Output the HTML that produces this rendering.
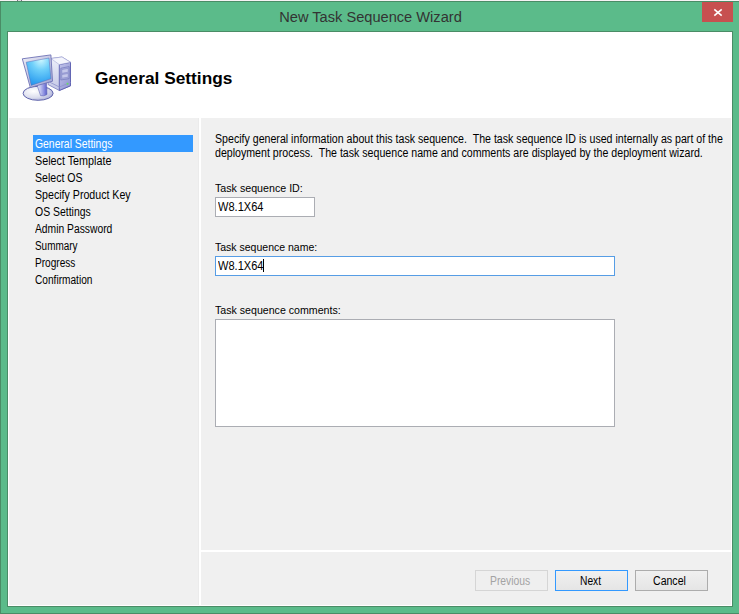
<!DOCTYPE html>
<html><head><meta charset="utf-8">
<style>
*{margin:0;padding:0;box-sizing:border-box}
html,body{width:739px;height:614px;overflow:hidden;background:#f7f3f5}
body{position:relative;font-family:"Liberation Sans",sans-serif;font-size:11px;color:#000}
.a{position:absolute}
.t{position:absolute;white-space:nowrap;line-height:14px;transform-origin:0 0}
#frame{left:0;top:1px;width:739px;height:613px;background:#5bbb8a}
#bt{left:0;top:1px;width:739px;height:1px;background:#4a8c66}
#bl{left:0;top:1px;width:1px;height:613px;background:#4a8c66}
#bb{left:0;top:613px;width:739px;height:1px;background:#4a8c66}
#title{left:1px;top:7.5px;width:739px;text-align:center;font-size:15.5px;color:#333;line-height:18px;transform:scaleX(0.943);transform-origin:369.5px 0}
#close{left:702px;top:2px;width:31px;height:20px;background:#c75050}
#client{left:7px;top:31px;width:726px;height:576px;background:#fff;border:1px solid #4a8c66}
#leftp{left:9px;top:118px;width:190px;height:487px;background:#f0f0f0;border-right:1px solid #ebebeb}
#rightp{left:201px;top:118px;width:530px;height:432px;background:#f0f0f0}
#botp{left:201px;top:552px;width:530px;height:53px;background:#f0f0f0}
#hdtitle{left:95px;top:68px;font-size:17px;font-weight:bold;line-height:22px;transform:scaleX(1.017)}
.nav{left:35px;font-size:11px}
#sel{left:33px;top:135px;width:160px;height:17px;background:#3399ff}
.btn{position:absolute;top:570px;width:73px;height:21px;border:1px solid #acacac;background:linear-gradient(#f0f0f0,#e5e5e5)}
.inp{position:absolute;background:#fff;border:1px solid #abadb3}
</style></head><body>
<div id="frame" class="a"></div>
<div id="bt" class="a"></div>
<div id="bl" class="a"></div>
<div id="bb" class="a"></div>
<div class="a" style="left:17px;top:0;width:5px;height:1px;background:#e0dce0"></div><div class="a" style="left:17px;top:0;width:1px;height:1px;background:#767080"></div>
<div class="a" style="left:21px;top:0;width:1px;height:1px;background:#767080"></div>
<div id="title" class="t">New Task Sequence Wizard</div>
<div id="close" class="a"><svg width="31" height="20" style="position:absolute;left:0;top:0"><path d="M12.3 7.4 L19.7 13.6 M19.7 7.4 L12.3 13.6" stroke="#fff" stroke-width="1.6" fill="none"/></svg></div>
<div id="client" class="a"></div>
<div id="leftp" class="a"></div>
<div id="rightp" class="a"></div>
<div id="botp" class="a"></div>

<svg class="a" style="left:18px;top:48px" width="60" height="56" viewBox="0 0 60 56">
  <defs>
    <radialGradient id="scr" cx="0.6" cy="0.05" r="1.1"><stop offset="0" stop-color="#d0f8ff"/><stop offset="0.35" stop-color="#70d0fa"/><stop offset="0.8" stop-color="#30a0f0"/><stop offset="1" stop-color="#1c84e6"/></radialGradient>
    <linearGradient id="frm" x1="0" y1="0" x2="1" y2="1"><stop offset="0" stop-color="#eeeef6"/><stop offset="1" stop-color="#9fa3d3"/></linearGradient>
    <linearGradient id="twr" x1="0" y1="0" x2="0" y2="1"><stop offset="0" stop-color="#eef0fa"/><stop offset="1" stop-color="#c4c7e6"/></linearGradient>
    <linearGradient id="twf" x1="0" y1="0" x2="1" y2="1"><stop offset="0" stop-color="#c0c3ea"/><stop offset="1" stop-color="#8e92d0"/></linearGradient>
    <linearGradient id="nck" x1="0" y1="0" x2="1" y2="0"><stop offset="0" stop-color="#e8e9f8"/><stop offset="0.35" stop-color="#c0c3ee"/><stop offset="0.7" stop-color="#8a8ee0"/><stop offset="1" stop-color="#5a5ec8"/></linearGradient>
    <radialGradient id="bas" cx="0.35" cy="0.35" r="0.75"><stop offset="0" stop-color="#ffffff"/><stop offset="0.6" stop-color="#dcdeee"/><stop offset="1" stop-color="#a4a8d6"/></radialGradient>
  </defs>
  <!-- tower -->
  <path d="M33 10.5 L44 9 L52.5 14.3 L52.5 37.8 L41.3 42.5 L30 36.5 Z" fill="url(#twr)" stroke="#7a7ec0" stroke-width="0.8"/>
  <path d="M41.3 16.6 L52.5 14.3 L52.5 37.8 L41.3 42.5 Z" fill="url(#twf)" stroke="#5c60b0" stroke-width="0.9"/>
  <path d="M33 10.5 L44 9 L52.5 14.3 L41.3 16.6 Z" fill="#f4f5fc" stroke="#9a9ed0" stroke-width="0.5"/>
  <path d="M42.8 20.2 L51.2 18.6 L51.2 30.6 L42.8 32 Z" fill="#a6aadc" stroke="#6a6eb6" stroke-width="0.6"/>
  <path d="M43.8 21.6 L50.2 20.4 L50.2 24.2 L43.8 25.3 Z" fill="#c4c7ea" stroke="#7c80c2" stroke-width="0.5"/>
  <path d="M43.8 26.6 L50.2 25.5 L50.2 29.2 L43.8 30.2 Z" fill="#c4c7ea" stroke="#7c80c2" stroke-width="0.5"/>
  <path d="M30.5 33.5 L41.3 39 L52.5 34.5" stroke="#8e92cc" stroke-width="0.8" fill="none"/>
  <circle cx="49.5" cy="35.8" r="1" fill="#66dd66"/>
  <!-- base -->
  <ellipse cx="20.1" cy="45.3" rx="15" ry="7" fill="url(#bas)" stroke="#5e62aa" stroke-width="1"/>
  <!-- neck -->
  <path d="M19 37 L28.5 33.5 L29 46.5 Q26 48.6 22.6 47.7 Z" fill="url(#nck)" stroke="#6266b6" stroke-width="0.6"/>
  <!-- monitor frame -->
  <path d="M4.3 10.8 L32.9 6.9 L34.5 33.2 L12.3 39.5 Z" fill="url(#frm)" stroke="#6e72b6" stroke-width="0.9"/>
  <path d="M8.2 14.2 L31 10 L32.9 30.8 L13.2 37.4 Z" fill="url(#scr)" stroke="#5a6ab4" stroke-width="0.5"/>
</svg>

<div id="hdtitle" class="t">General Settings</div>

<div id="sel" class="a"></div>
<div class="t nav" style="font-size:12px;top:137px;color:#fff;transform:scaleX(0.8653)">General Settings</div>
<div class="t nav" style="font-size:12px;top:154px;transform:scaleX(0.8974)">Select Template</div>
<div class="t nav" style="font-size:12px;top:171px;transform:scaleX(0.8800)">Select OS</div>
<div class="t nav" style="font-size:12px;top:188px;transform:scaleX(0.8855)">Specify Product Key</div>
<div class="t nav" style="font-size:12px;top:205px;transform:scaleX(0.8708)">OS Settings</div>
<div class="t nav" style="font-size:12px;top:222px;transform:scaleX(0.8589)">Admin Password</div>
<div class="t nav" style="font-size:12px;top:239px;transform:scaleX(0.8268)">Summary</div>
<div class="t nav" style="font-size:12px;top:256px;transform:scaleX(0.8415)">Progress</div>
<div class="t nav" style="font-size:12px;top:273px;transform:scaleX(0.8443)">Confirmation</div>

<div class="t" style="left:215px;top:132px;font-size:12px;transform:scaleX(0.8846)">Specify general information about this task sequence.&nbsp; The task sequence ID is used internally as part of the</div>
<div class="t" style="left:215px;top:146px;font-size:12px;transform:scaleX(0.8846)">deployment process.&nbsp; The task sequence name and comments are displayed by the deployment wizard.</div>
<div class="t" style="left:215px;top:181px;transform:scaleX(0.97)">Task sequence ID:</div>
<div class="inp" style="left:215px;top:197px;width:100px;height:20px"></div>
<div class="t" style="left:218px;top:200px;font-size:12px;transform:scaleX(0.92)">W8.1X64</div>
<div class="t" style="left:215px;top:240px;transform:scaleX(0.955)">Task sequence name:</div>
<div class="inp" style="left:215px;top:256px;width:400px;height:20px;border-color:#569de5"></div>
<div class="t" style="left:218px;top:259px;font-size:12px;transform:scaleX(0.92)">W8.1X64</div>
<div class="a" style="left:263px;top:259px;width:1px;height:13px;background:#000"></div>
<div class="t" style="left:215px;top:303px;transform:scaleX(0.965)">Task sequence comments:</div>
<div class="inp" style="left:215px;top:319px;width:400px;height:108px"></div>

<div class="btn" style="left:475px;border-color:#d5d5d5;background:#efefef"></div>
<div class="btn" style="left:555px;border-color:#3399ff"></div>
<div class="btn" style="left:635px"></div>
<div class="t" style="font-size:12px;left:490px;top:574px;color:#a3a3a3;transform:scaleX(0.8617)">Previous</div>
<div class="t" style="font-size:12px;left:580px;top:574px;transform:scaleX(0.8525)">Next</div>
<div class="t" style="font-size:12px;left:653px;top:574px;transform:scaleX(0.8800)">Cancel</div>
</body></html>
